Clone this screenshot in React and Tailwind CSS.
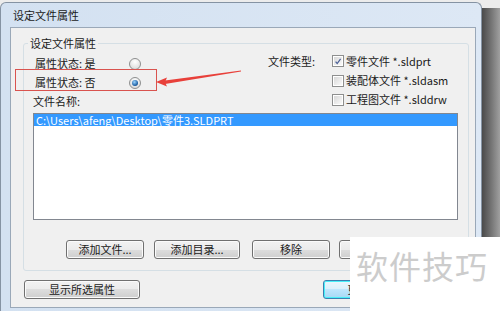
import React from "react";

const Radio = ({ checked }) => (
  <span className="flex h-[12px] w-[12px] items-center justify-center rounded-full border border-[#8e8f8f] bg-[radial-gradient(circle_at_50%_30%,#ffffff,#d4d4d4)]">
    {checked && (
      <span className="h-[6px] w-[6px] rounded-full bg-[radial-gradient(circle_at_40%_35%,#9ad4ff,#1d5fa3_65%,#0f3a6a)]" />
    )}
  </span>
);

const Check = ({ checked }) => (
  <span className="flex h-[12px] w-[12px] border border-[#8e8f8f] bg-white p-[1px]">
    <span className="flex h-full w-full items-center justify-center bg-linear-to-br from-[#d8d8d8] to-[#fafafa]">
      {checked && (
        <svg width="9" height="9" viewBox="0 0 9 9">
          <path d="M1.8 4.6 L3.6 6.8 L7.4 1.6" stroke="#4a5f97" strokeWidth="1.4" fill="none" />
        </svg>
      )}
    </span>
  </span>
);

const Btn = ({ children, className = "" }) => (
  <div
    className={`flex h-[19px] items-center justify-center rounded-[3px] border border-[#707070] bg-[linear-gradient(#f2f2f2,#ebebeb_50%,#dddddd_50%,#cfcfcf)] leading-none shadow-[inset_0_0_0_1px_#fbfbfb] ${className}`}
  >
    {children}
  </div>
);

export default function App() {
  return (
    <div className="relative flex h-[311px] w-[500px] overflow-hidden bg-[#ececec] font-['Noto_Sans_CJK_SC','Noto_Sans',sans-serif] text-[11px] text-[#1a1a1a]">
      {/* dialog window */}
      <div className="mt-[2px] flex w-[482px] flex-col rounded-t-[6px] border border-b-0 border-[#8593a3] bg-linear-to-r from-[#d3e1f1] to-[#dde8f5]">
        <div className="flex h-[24px] items-center pl-[12px] leading-none">设定文件属性</div>

        <div className="ml-[9px] mr-[5px] flex flex-1 flex-col border border-[#9aa8b8] bg-[#f0f0f0]">
          <fieldset className="ml-[12px] mr-[6px] mt-[8px] rounded-[3px] border border-[#d5dfe5] pb-[11px]">
            <legend className="ml-[4px] px-[2px] leading-[15px]">设定文件属性</legend>

            <div className="grid grid-cols-[233px_1fr] pl-[11px] pt-[3px]">
              <div className="flex flex-col">
                <div className="flex h-[19px] items-center">
                  <span className="w-[94px]">属性状态: 是</span>
                  <Radio />
                </div>
                <div className="flex h-[19px] items-center">
                  <span className="w-[94px]">属性状态: 否</span>
                  <Radio checked />
                </div>
                <div className="-ml-[2px] flex h-[19px] items-center">文件名称:</div>
              </div>

              <div className="-mt-[3px] flex flex-col">
                <div className="flex h-[20px] items-center">
                  <span className="w-[64px]">文件类型:</span>
                  <Check checked />
                  <span className="ml-[2px]">零件文件 *.sldprt</span>
                </div>
                <div className="flex h-[19px] items-center pl-[64px]">
                  <Check />
                  <span className="ml-[2px]">装配体文件 *.sldasm</span>
                </div>
                <div className="flex h-[19px] items-center pl-[64px]">
                  <Check />
                  <span className="ml-[2px]">工程图文件 *.slddrw</span>
                </div>
              </div>
            </div>

            <div className="ml-[9px] mr-[10px] mt-[2px] h-[107px] border border-[#828790] bg-white">
              <div className="h-[12px] bg-[#3399ff] pl-[2px] leading-[12px] text-white">
                C:\Users\afeng\Desktop\零件3.SLDPRT
              </div>
            </div>

            <div className="mt-[20px] flex pl-[42px]">
              <Btn className="w-[78px]">添加文件...</Btn>
              <Btn className="ml-[10px] w-[86px]">添加目录...</Btn>
              <Btn className="ml-[12px] w-[78px]">移除</Btn>
              <Btn className="ml-[9px] w-[78px]" />
            </div>
          </fieldset>

          <div className="ml-[13px] mt-[9px] flex">
            <Btn className="w-[116px]">显示所选属性</Btn>
            <div className="ml-[183px] flex h-[19px] w-[80px] items-center justify-center rounded-[3px] border border-[#3c7fb1] bg-[linear-gradient(#eaf6fd,#d9f0fc_50%,#bee6fd_50%,#a7d9f5)] leading-none shadow-[inset_0_0_0_1px_#48f0f8]">
              更新...
            </div>
          </div>
        </div>
        <div className="h-[3px]" />
      </div>

      {/* shadow at right of window */}
      <div className="mt-[8px] flex-1 bg-linear-to-r from-[#4a4a4a] to-[#a0a0a0]" />

      {/* annotation */}
      <div className="absolute left-[15px] top-[69px] h-[22px] w-[142px] border border-[#d9534f]" />
      <svg className="absolute left-[155px] top-[68px]" width="90" height="22" viewBox="0 0 90 22">
        <polygon points="10,12.5 10,16 86,3.6 86,2.4" fill="#e8403a" />
        <polygon points="1,14 12,9.5 10,14.2 12,18.5" fill="#e8403a" />
      </svg>

      {/* watermark */}
      <div className="absolute bottom-0 left-[350px] right-0 top-[237px] bg-white">
        <div className="ml-[6px] mt-[10px] text-[32px] leading-[36px] tracking-[1px] text-[#cccccc]">软件技巧</div>
      </div>
    </div>
  );
}
